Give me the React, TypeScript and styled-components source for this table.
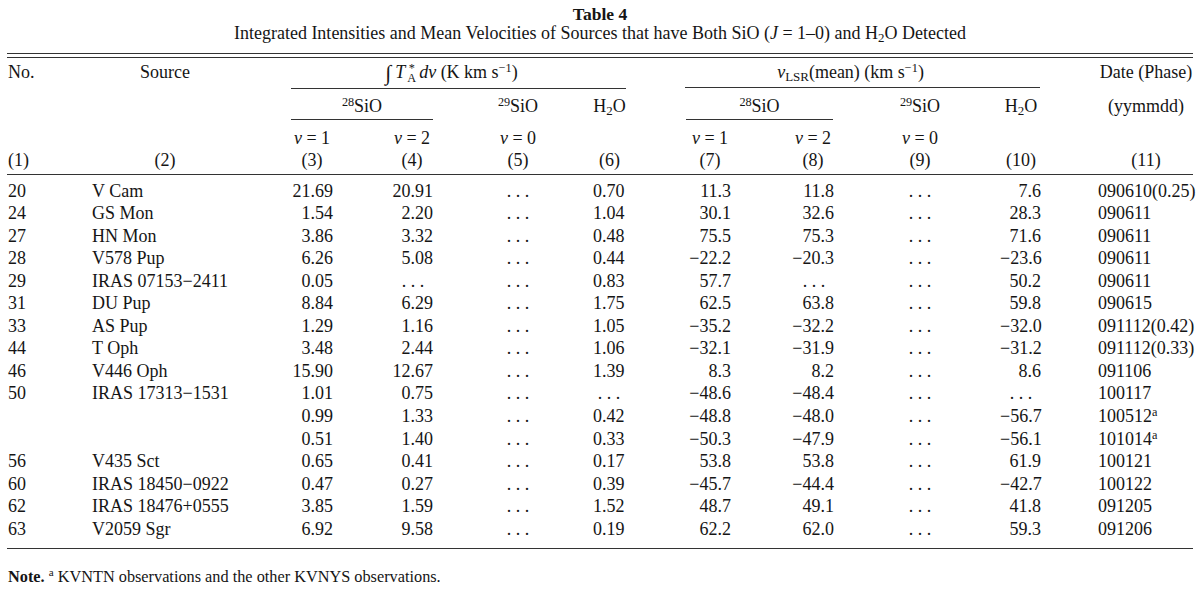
import React from 'react';
import styled, { createGlobalStyle } from 'styled-components';

const GlobalStyle = createGlobalStyle`
  html, body { margin: 0; padding: 0; background: #ffffff; }
  body {
    font-family: "Liberation Serif", "Times New Roman", serif;
    color: #151515;
  }
`;

const Page = styled.div`
  width: 1200px;
  height: 590px;
  box-sizing: border-box;
  padding: 0 7px;
  overflow: hidden;
`;

const Title = styled.div`
  text-align: center;
  font-weight: bold;
  font-size: 17.5px;
  line-height: 20px;
  padding-top: 4px;
`;

const Subtitle = styled.div`
  text-align: center;
  font-size: 18px;
  line-height: 19px;
`;

const DoubleRule = styled.div`
  margin-top: 10px;
  height: 3px;
  border-top: 1px solid #333;
  border-bottom: 1px solid #333;
`;

const Table = styled.table`
  width: 1186px;
  table-layout: fixed;
  border-collapse: collapse;
  font-size: 18px;

  tbody tr:first-child td { padding-top: 5px; }
  tbody tr:last-child td {
    padding-bottom: 8px;
    border-bottom: 1px solid #333;
  }
`;

type Align = 'left' | 'center' | 'right';

const HeadCell = styled.th<{ $align: Align; $pl?: number; $pr?: number; $pt: number; $rule?: boolean }>`
  font-weight: normal;
  text-align: ${(p) => p.$align};
  vertical-align: top;
  white-space: nowrap;
  line-height: 22px;
  padding: ${(p) => p.$pt}px ${(p) => p.$pr ?? 0}px ${(p) => (p.$rule ? 3 : 0)}px ${(p) => p.$pl ?? 0}px;
  border-bottom: ${(p) => (p.$rule ? '1px solid #333' : 'none')};
`;

const GroupLabel = styled.div<{ $pb: number }>`
  text-align: center;
  padding-bottom: ${(p) => p.$pb}px;
  border-bottom: 1px solid #333;
`;

const LabelText = styled.span<{ $shift: number }>`
  display: inline-block;
  margin-right: ${(p) => p.$shift}px;
`;

const Slot = styled.span<{ $w: number }>`
  display: inline-block;
  width: ${(p) => p.$w}px;
  text-align: center;
`;

const DataCell = styled.td<{ $align: Align; $pl?: number; $pr?: number }>`
  text-align: ${(p) => p.$align};
  vertical-align: top;
  white-space: nowrap;
  line-height: 22.55px;
  padding: 0 ${(p) => p.$pr ?? 0}px 0 ${(p) => p.$pl ?? 0}px;
`;

const Sup = styled.sup`
  font-size: 0.68em;
  vertical-align: 0.5em;
  line-height: 0;
`;

const Sub = styled.sub`
  font-size: 0.72em;
  vertical-align: -0.25em;
  line-height: 0;
`;

const Integral = styled.span`
  display: inline-block;
  font-size: 1.2em;
  line-height: 0;
  vertical-align: -2px;
  margin-right: 4px;
`;

const Stack = styled.span`
  display: inline-flex;
  flex-direction: column;
  align-items: center;
  font-size: 0.68em;
  line-height: 0.8;
  vertical-align: 6px;
  margin: 0 3px 0 2px;
`;

const Note = styled.p`
  margin: 18px 0 0 1px;
  font-size: 16.3px;
  line-height: 20px;
`;

const Dots = () => <>. . .</>;

const V = ({ n }: { n: number }) => (
  <>
    <i>v</i> = {n}
  </>
);

const SiO = ({ iso }: { iso: number }) => (
  <>
    <Sup>{iso}</Sup>SiO
  </>
);

const H2O = () => (
  <>
    H<Sub>2</Sub>O
  </>
);

type Col = { align: Align; pl?: number; pr?: number; dot?: number };

const valueCols: Col[] = [
  { align: 'right', pr: 0, dot: 40 },
  { align: 'right', pr: 0, dot: 40 },
  { align: 'center', pl: 10 },
  { align: 'right', pr: 37, dot: 28 },
  { align: 'right', pr: 0, dot: 40 },
  { align: 'right', pr: 0, dot: 40 },
  { align: 'center', pl: 6 },
  { align: 'right', pr: 34, dot: 40 },
];

type Row = { no: string; src: string; vals: string[]; date: string; a?: boolean };

const D = '…';

const rows: Row[] = [
  { no: '20', src: 'V Cam', vals: ['21.69', '20.91', D, '0.70', '11.3', '11.8', D, '7.6'], date: '090610(0.25)' },
  { no: '24', src: 'GS Mon', vals: ['1.54', '2.20', D, '1.04', '30.1', '32.6', D, '28.3'], date: '090611' },
  { no: '27', src: 'HN Mon', vals: ['3.86', '3.32', D, '0.48', '75.5', '75.3', D, '71.6'], date: '090611' },
  { no: '28', src: 'V578 Pup', vals: ['6.26', '5.08', D, '0.44', '−22.2', '−20.3', D, '−23.6'], date: '090611' },
  { no: '29', src: 'IRAS 07153−2411', vals: ['0.05', D, D, '0.83', '57.7', D, D, '50.2'], date: '090611' },
  { no: '31', src: 'DU Pup', vals: ['8.84', '6.29', D, '1.75', '62.5', '63.8', D, '59.8'], date: '090615' },
  { no: '33', src: 'AS Pup', vals: ['1.29', '1.16', D, '1.05', '−35.2', '−32.2', D, '−32.0'], date: '091112(0.42)' },
  { no: '44', src: 'T Oph', vals: ['3.48', '2.44', D, '1.06', '−32.1', '−31.9', D, '−31.2'], date: '091112(0.33)' },
  { no: '46', src: 'V446 Oph', vals: ['15.90', '12.67', D, '1.39', '8.3', '8.2', D, '8.6'], date: '091106' },
  { no: '50', src: 'IRAS 17313−1531', vals: ['1.01', '0.75', D, D, '−48.6', '−48.4', D, D], date: '100117' },
  { no: '', src: '', vals: ['0.99', '1.33', D, '0.42', '−48.8', '−48.0', D, '−56.7'], date: '100512', a: true },
  { no: '', src: '', vals: ['0.51', '1.40', D, '0.33', '−50.3', '−47.9', D, '−56.1'], date: '101014', a: true },
  { no: '56', src: 'V435 Sct', vals: ['0.65', '0.41', D, '0.17', '53.8', '53.8', D, '61.9'], date: '100121' },
  { no: '60', src: 'IRAS 18450−0922', vals: ['0.47', '0.27', D, '0.39', '−45.7', '−44.4', D, '−42.7'], date: '100122' },
  { no: '62', src: 'IRAS 18476+0555', vals: ['3.85', '1.59', D, '1.52', '48.7', '49.1', D, '41.8'], date: '091205' },
  { no: '63', src: 'V2059 Sgr', vals: ['6.92', '9.58', D, '0.19', '62.2', '62.0', D, '59.3'], date: '091206' },
];

const widths = [73, 170, 83, 100, 160, 67, 71, 103, 166, 75, 118];

export default function App() {
  return (
    <Page>
      <GlobalStyle />
      <Title>Table 4</Title>
      <Subtitle>
        Integrated Intensities and Mean Velocities of Sources that have Both SiO (<i>J</i> = 1–0) and <H2O /> Detected
      </Subtitle>
      <DoubleRule />
      <Table>
        <colgroup>
          {widths.map((w, i) => (
            <col key={i} style={{ width: w }} />
          ))}
        </colgroup>
        <thead>
          <tr>
            <HeadCell $align="left" $pl={1} $pt={3}>No.</HeadCell>
            <HeadCell $align="center" $pt={3}>Source</HeadCell>
            <HeadCell colSpan={4} $align="center" $pt={3} $pl={41} $pr={34}>
              <GroupLabel $pb={4}>
                <LabelText $shift={14}>
                  <Integral>∫</Integral>
                  <i>T</i>
                  <Stack>
                    <span>*</span>
                    <span>A</span>
                  </Stack>
                  <i>dv</i> (K km s<Sup>−1</Sup>)
                </LabelText>
              </GroupLabel>
            </HeadCell>
            <HeadCell colSpan={4} $align="center" $pt={3} $pl={25} $pr={35}>
              <GroupLabel $pb={4}>
                <LabelText $shift={24}>
                  <i>v</i>
                  <Sub>LSR</Sub>(mean) (km s<Sup>−1</Sup>)
                </LabelText>
              </GroupLabel>
            </HeadCell>
            <HeadCell $align="left" $pl={23} $pt={3}>
              <Slot $w={96}>Date (Phase)</Slot>
            </HeadCell>
          </tr>
          <tr>
            <HeadCell $align="left" $pt={6} />
            <HeadCell $align="left" $pt={6} />
            <HeadCell colSpan={2} $align="center" $pt={6} $pl={41}>
              <GroupLabel $pb={2}>
                <SiO iso={28} />
              </GroupLabel>
            </HeadCell>
            <HeadCell $align="center" $pl={10} $pt={6}>
              <SiO iso={29} />
            </HeadCell>
            <HeadCell $align="right" $pr={34} $pt={6}>
              <Slot $w={33}>
                <H2O />
              </Slot>
            </HeadCell>
            <HeadCell colSpan={2} $align="center" $pt={6} $pl={26} $pr={1}>
              <GroupLabel $pb={2}>
                <SiO iso={28} />
              </GroupLabel>
            </HeadCell>
            <HeadCell $align="center" $pl={6} $pt={6}>
              <SiO iso={29} />
            </HeadCell>
            <HeadCell $align="right" $pr={34} $pt={6}>
              <Slot $w={42}>
                <H2O />
              </Slot>
            </HeadCell>
            <HeadCell $align="left" $pl={23} $pt={6}>
              <Slot $w={96}>(yymmdd)</Slot>
            </HeadCell>
          </tr>
          <tr>
            <HeadCell $align="left" $pt={7} />
            <HeadCell $align="left" $pt={7} />
            <HeadCell $align="right" $pt={7}>
              <Slot $w={42}><V n={1} /></Slot>
            </HeadCell>
            <HeadCell $align="right" $pt={7}>
              <Slot $w={42}><V n={2} /></Slot>
            </HeadCell>
            <HeadCell $align="center" $pl={10} $pt={7}><V n={0} /></HeadCell>
            <HeadCell $align="right" $pt={7} />
            <HeadCell $align="right" $pt={7}>
              <Slot $w={42}><V n={1} /></Slot>
            </HeadCell>
            <HeadCell $align="right" $pt={7}>
              <Slot $w={42}><V n={2} /></Slot>
            </HeadCell>
            <HeadCell $align="center" $pl={6} $pt={7}><V n={0} /></HeadCell>
            <HeadCell $align="right" $pt={7} />
            <HeadCell $align="left" $pt={7} />
          </tr>
          <tr>
            <HeadCell $align="left" $pl={1} $pt={0} $rule>(1)</HeadCell>
            <HeadCell $align="center" $pt={0} $rule>(2)</HeadCell>
            <HeadCell $align="right" $pt={0} $rule><Slot $w={42}>(3)</Slot></HeadCell>
            <HeadCell $align="right" $pt={0} $rule><Slot $w={42}>(4)</Slot></HeadCell>
            <HeadCell $align="center" $pl={10} $pt={0} $rule>(5)</HeadCell>
            <HeadCell $align="right" $pr={34} $pt={0} $rule><Slot $w={33}>(6)</Slot></HeadCell>
            <HeadCell $align="right" $pt={0} $rule><Slot $w={42}>(7)</Slot></HeadCell>
            <HeadCell $align="right" $pt={0} $rule><Slot $w={42}>(8)</Slot></HeadCell>
            <HeadCell $align="center" $pl={6} $pt={0} $rule>(9)</HeadCell>
            <HeadCell $align="right" $pr={34} $pt={0} $rule><Slot $w={42}>(10)</Slot></HeadCell>
            <HeadCell $align="left" $pl={23} $pt={0} $rule><Slot $w={96}>(11)</Slot></HeadCell>
          </tr>
        </thead>
        <tbody>
          {rows.map((r, i) => (
            <tr key={i}>
              <DataCell $align="left" $pl={1}>{r.no}</DataCell>
              <DataCell $align="left" $pl={12}>{r.src}</DataCell>
              {r.vals.map((v, j) => {
                const c = valueCols[j];
                return (
                  <DataCell key={j} $align={c.align} $pl={c.pl} $pr={c.pr}>
                    {v === D ? (
                      c.dot ? (
                        <Slot $w={c.dot}>
                          <Dots />
                        </Slot>
                      ) : (
                        <Dots />
                      )
                    ) : (
                      v
                    )}
                  </DataCell>
                );
              })}
              <DataCell $align="left" $pl={23}>
                {r.date}
                {r.a && <Sup>a</Sup>}
              </DataCell>
            </tr>
          ))}
        </tbody>
      </Table>
      <Note>
        <b>Note.</b> <Sup>a</Sup> KVNTN observations and the other KVNYS observations.
      </Note>
    </Page>
  );
}
